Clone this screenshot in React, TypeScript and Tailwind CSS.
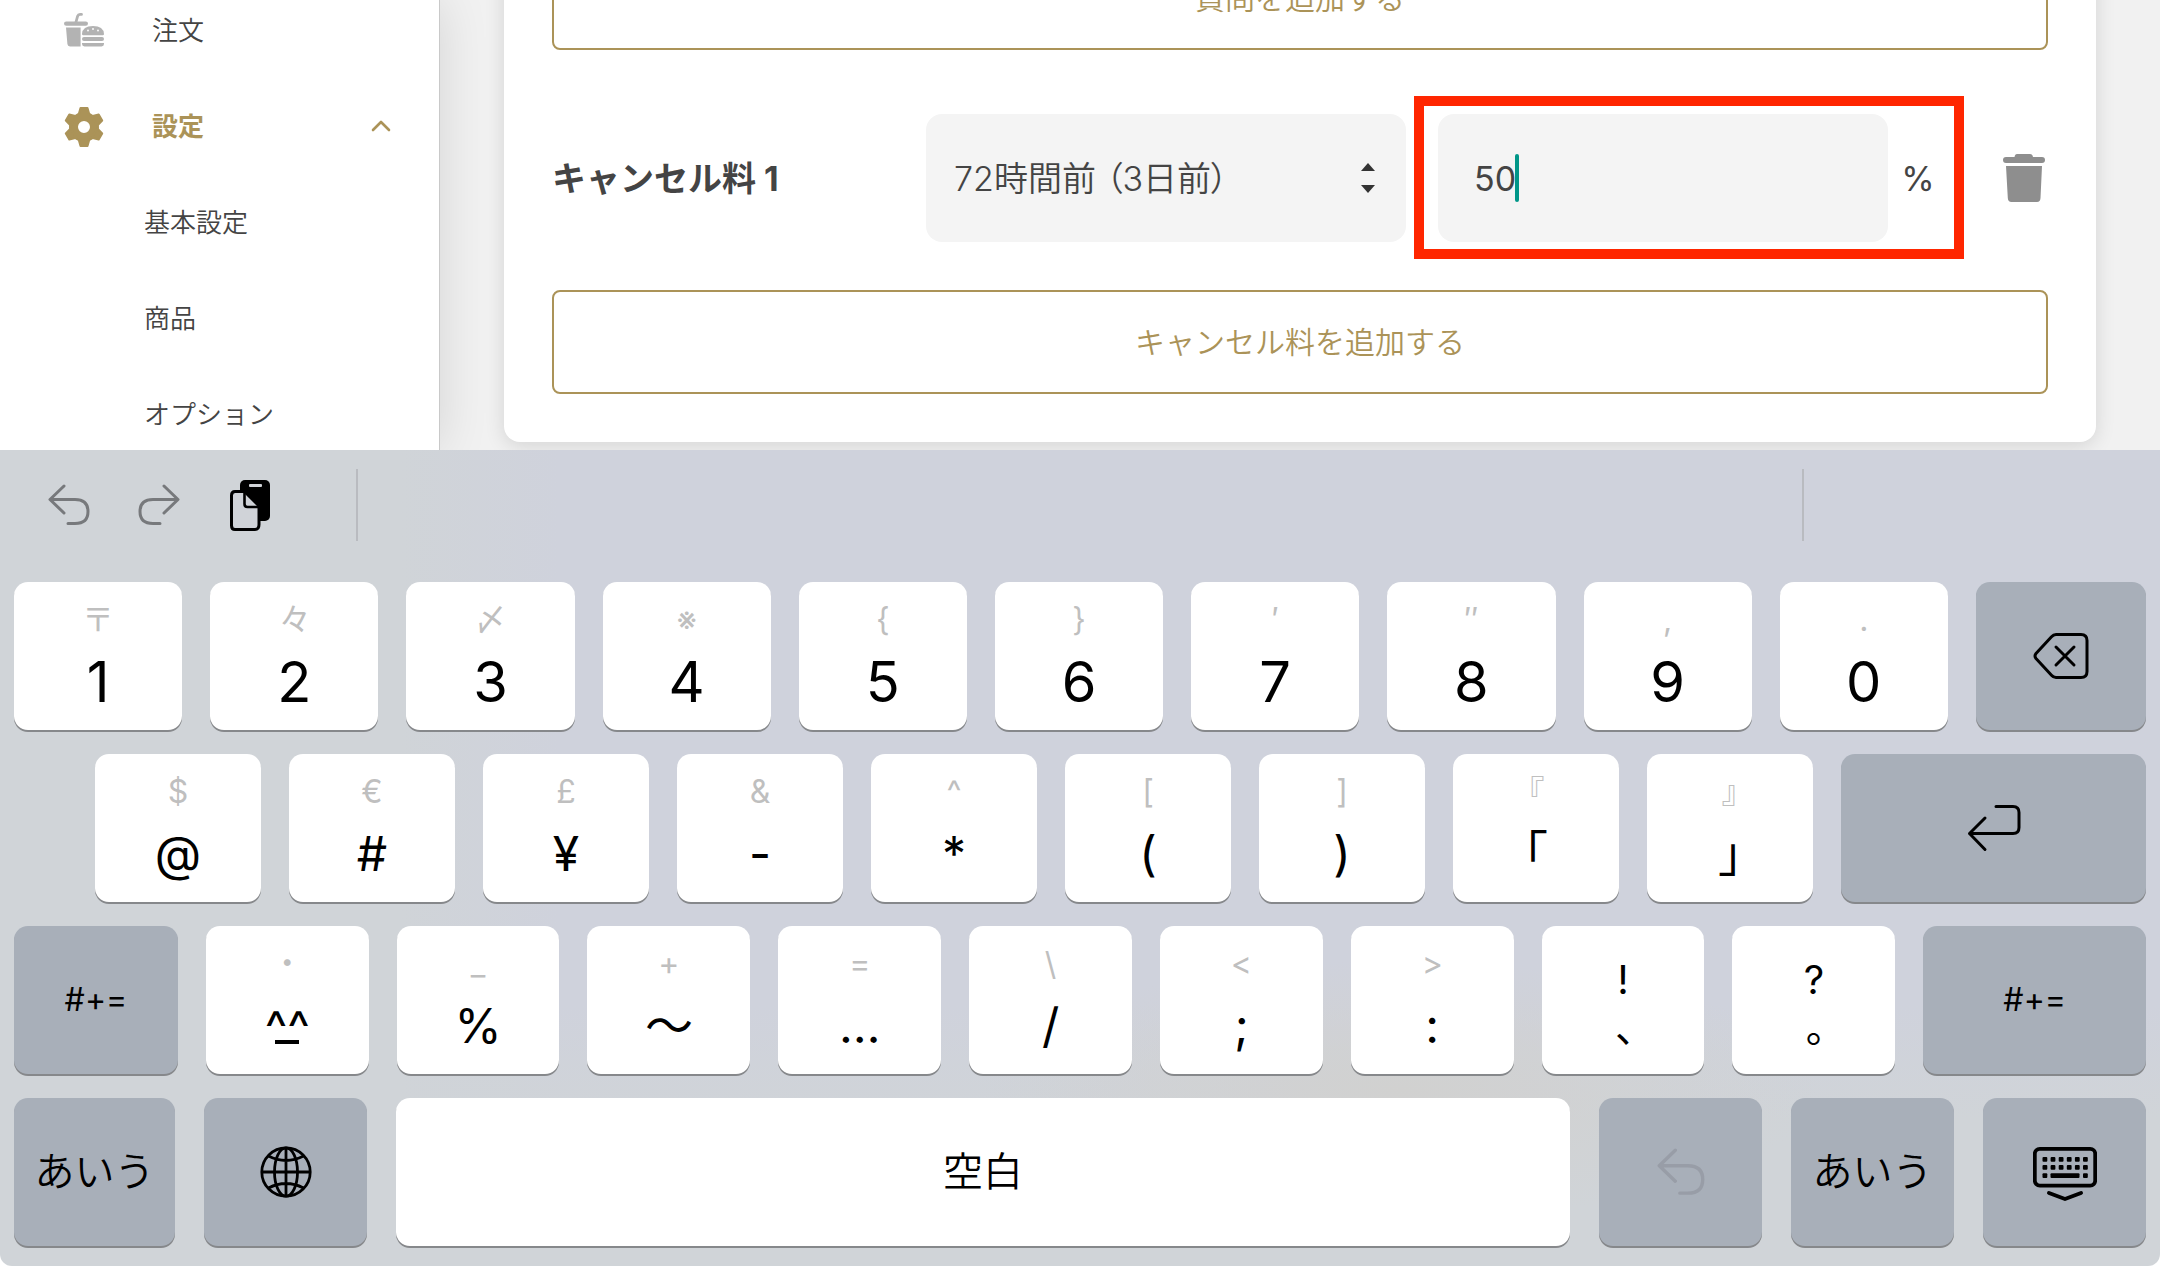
import type { ReactNode } from "react";

const cjk = "font-[Inter,'Noto_Sans_CJK_JP',sans-serif]";

type KeyDef = { hint?: string; main: string };

const digits: KeyDef[] = [
  { hint: "〒", main: "1" },
  { hint: "々", main: "2" },
  { hint: "〆", main: "3" },
  { hint: "※", main: "4" },
  { hint: "{", main: "5" },
  { hint: "}", main: "6" },
  { hint: "′", main: "7" },
  { hint: "″", main: "8" },
  { hint: ",", main: "9" },
  { hint: ".", main: "0" },
];

const symbols: KeyDef[] = [
  { hint: "$", main: "@" },
  { hint: "€", main: "#" },
  { hint: "£", main: "¥" },
  { hint: "&", main: "-" },
  { hint: "^", main: "*" },
  { hint: "[", main: "(" },
  { hint: "]", main: ")" },
  { hint: "『", main: "｢" },
  { hint: "』", main: "｣" },
];

const marks: KeyDef[] = [
  { hint: "・", main: "^_^" },
  { hint: "_", main: "%" },
  { hint: "+", main: "〜" },
  { hint: "=", main: "…" },
  { hint: "\\", main: "/" },
  { hint: "<", main: ";" },
  { hint: ">", main: ":" },
];

function FoodIcon() {
  return (
    <svg width="40" height="34" viewBox="0 0 40 34" fill="#b3b3b3">
      <path d="M12 9 13.6 3.2Q14.200 1.400 16 1.400H17.500" fill="none" stroke="#b3b3b3" strokeWidth="2.800" strokeLinecap="round" />
      <rect x="0" y="8.400" width="24" height="4.400" rx="2.200" />
      <path d="M2 14.500H16.600V33.400H6Q3.600 33.400 3.400 31Z" />
      <path d="M18 21Q18.500 13 29 13Q39.500 13 40 21Q40 22.200 38.800 22.200H19.200Q18 22.200 18 21Z" />
      <rect x="18" y="24" width="22" height="4" rx="2" />
      <path d="M18 30H40V31Q40 33.400 37.500 33.400H20.500Q18 33.400 18 31Z" />
      <g fill="#fff">
        <circle cx="24" cy="17.500" r="0.900" />
        <circle cx="29" cy="16" r="0.900" />
        <circle cx="34" cy="17.500" r="0.900" />
      </g>
    </svg>
  );
}

function GearIcon() {
  const teeth = [0, 60, 120, 180, 240, 300];
  return (
    <svg width="48" height="48" viewBox="0 0 48 48" fill="none" stroke="#ab9358" strokeLinejoin="round">
      <circle cx="24" cy="25" r="10.500" strokeWidth="9" />
      {teeth.map((deg) => (
        <path key={deg} d="M20.500 6H27.500L29.500 13H18.500Z" fill="#ab9358" strokeWidth="2" transform={`rotate(${deg} 24 25)`} />
      ))}
    </svg>
  );
}

function UndoIcon({ className = "" }: { className?: string }) {
  return (
    <svg width="42" height="42" viewBox="0 0 42 42" fill="none" stroke="currentColor" strokeWidth="3" strokeLinecap="round" strokeLinejoin="round" className={className}>
      <path d="M16 2 2 15.500 16 29M2.500 15.500H27Q40 15.500 40 27.500 40 39.500 27 39.500H20" />
    </svg>
  );
}

function PasteIcon() {
  return (
    <svg width="42" height="52" viewBox="0 0 42 52">
      <rect x="11" y="1" width="30" height="41" rx="5" fill="#000" />
      <rect x="20" y="5" width="13" height="3" rx="1" fill="#d0d3d8" />
      <path d="M6 12.500H15.500L30 27V45.500Q30 50.500 26 50.500H6Q2.500 50.500 2.500 46.500V16.500Q2.500 12.500 6 12.500Z" fill="#d0d3d8" stroke="#000" strokeWidth="3" />
      <path d="M15.500 12.500V25Q15.500 28 18.500 28H30" fill="none" stroke="#000" strokeWidth="2.600" />
    </svg>
  );
}

function DeleteIcon() {
  return (
    <svg width="56" height="48" viewBox="0 0 56 48" fill="none" stroke="#000" strokeWidth="3" strokeLinecap="round" strokeLinejoin="round">
      <path d="M23 2.500H48Q54 2.500 54 8.500V39.500Q54 45.500 48 45.500H23Q20.500 45.500 18.500 43.200L3 26.500Q1 24 3 21.500L18.500 4.800Q20.500 2.500 23 2.500Z" />
      <path d="M23 15 41 33M41 15 23 33" />
    </svg>
  );
}

function ReturnIcon() {
  return (
    <svg width="54" height="48" viewBox="0 0 54 48" fill="none" stroke="#000" strokeWidth="3" strokeLinecap="round" strokeLinejoin="round">
      <path d="M29 2.500H46Q52 2.500 52 8.500V23.500Q52 29.500 46 29.500H2.500M18 14 2.500 29.500 18 45.500" />
    </svg>
  );
}

function GlobeIcon() {
  return (
    <svg width="52" height="52" viewBox="0 0 52 52" fill="none" stroke="#000" strokeWidth="2.800">
      <circle cx="26" cy="26" r="24.200" />
      <ellipse cx="26" cy="26" rx="11.500" ry="24.200" />
      <path d="M26 2V50M2 26H50M8.500 10Q26 19 43.500 10M8.500 42Q26 33 43.500 42" />
    </svg>
  );
}

function KeyboardIcon() {
  const dots = [0, 1, 2, 3, 4, 5];
  return (
    <svg width="64" height="62" viewBox="0 -6 64 62">
      <rect x="1.800" y="1.800" width="60.400" height="36.800" rx="5" fill="none" stroke="#000" strokeWidth="3.800" />
      {dots.map((i) => (
        <g key={i}>
          <rect x={9.5 + i * 8.1} y="10" width="4.800" height="4.800" rx="1" />
          <rect x={9.5 + i * 8.1} y="18" width="4.800" height="4.800" rx="1" />
        </g>
      ))}
      <rect x="9.500" y="26.200" width="4.800" height="4.800" rx="1" />
      <rect x="17.500" y="26.200" width="29" height="4.800" rx="1" />
      <rect x="50" y="26.200" width="4.800" height="4.800" rx="1" />
      <path d="M16 46 32 52 48 46" fill="none" stroke="#000" strokeWidth="4" strokeLinecap="round" strokeLinejoin="round" />
    </svg>
  );
}

function Key({ children, className = "", dark = false, label }: { children: ReactNode; className?: string; dark?: boolean; label?: string }) {
  return (
    <button
      type="button"
      aria-label={label}
      className={`flex h-[148px] min-w-0 flex-col items-center rounded-[14px] shadow-[0_2px_0_#86888b] ${dark ? "justify-center bg-[#a8afb9]" : "bg-white"} ${className}`}
    >
      {children}
    </button>
  );
}

function CharKey({ hint, main, size, className }: KeyDef & { size: string; className: string }) {
  return (
    <Key className={className}>
      <span className="mt-4 h-11 text-[32px] leading-[44px] text-[#bfbfbf] [font-feature-settings:'palt']">{hint}</span>
      {main === "^_^" ? (
        <span className="flex h-20 flex-col items-center pt-[18px] text-[48px] leading-[48px]">
          <span className="h-9">^^</span>
          <span className="h-1 w-6 bg-black" />
        </span>
      ) : (
        <span className={`h-20 leading-[80px] [font-feature-settings:'palt'] ${size}`}>{main}</span>
      )}
    </Key>
  );
}

function PunctuationKey({ top, bottom }: { top: string; bottom: string }) {
  return (
    <Key className="flex-[163] justify-center pt-2 text-[40px] leading-[48px]">
      <span>{top}</span>
      <span className="pl-6">{bottom}</span>
    </Key>
  );
}

function AddButton({ children }: { children: ReactNode }) {
  return (
    <button type="button" className="h-[104px] w-full shrink-0 rounded-lg border-2 border-[#ab9358] text-[30px] font-[350] text-[#ab9358]">
      {children}
    </button>
  );
}

function Sidebar() {
  return (
    <aside className="z-10 w-[440px] shrink-0 border-r border-[#c9c9c9] bg-white shadow-[0_0_48px_rgba(0,0,0,0.12)]">
      <nav className="-mt-[18px] text-[26px] font-[350] text-[#444]">
        <a href="#orders" className="flex h-24 items-center pl-16">
          <span className="w-[88px]"><FoodIcon /></span>
          注文
        </a>
        <a href="#settings" className="flex h-24 items-center pl-[60px] font-bold text-[#ab9358]">
          <span className="w-[92px]"><GearIcon /></span>
          設定
          <svg width="20" height="12" viewBox="0 0 20 12" fill="none" stroke="currentColor" strokeWidth="2.600" strokeLinecap="round" strokeLinejoin="round" className="mr-12 ml-auto">
            <path d="M2 10 10 2 18 10" />
          </svg>
        </a>
        <a href="#basic" className="flex h-24 items-center pl-36">基本設定</a>
        <a href="#items" className="flex h-24 items-center pl-36">商品</a>
        <a href="#options" className="flex h-24 items-center pl-36">オプション</a>
      </nav>
    </aside>
  );
}

function CancelFeeRow() {
  return (
    <div className="my-12 flex shrink-0 items-center pt-4 text-[34px] text-[#444]">
      <label htmlFor="timing" className="w-[374px] shrink-0 font-bold">キャンセル料 1</label>
      <div className="relative w-[480px] shrink-0">
        <select id="timing" className="h-32 w-full appearance-none rounded-2xl bg-[#f4f4f4] pl-7 font-[350] [font-feature-settings:'palt']">
          <option>72時間前 （3日前）</option>
        </select>
        <svg width="14" height="30" viewBox="0 0 14 30" fill="#333" className="pointer-events-none absolute top-[49px] right-[31px]">
          <path d="M7 0 14 8H0ZM0 22H14L7 30Z" />
        </svg>
      </div>
      {/* Highlighted fee input */}
      <div className="relative ml-8 flex min-w-0 flex-1 items-center">
        <div className="pointer-events-none absolute -top-[18px] -right-4 -bottom-[17px] -left-6 border-[10px] border-[#ff2600]" />
        <input aria-label="キャンセル料" defaultValue="50" className="h-32 min-w-0 flex-1 rounded-2xl bg-[#f4f4f4] pl-9" />
        <span className="absolute top-10 left-[77px] h-12 w-1 rounded-full bg-[#009688]" />
        <span className="w-[60px] text-center">%</span>
      </div>
      <button type="button" aria-label="削除" className="ml-[54px] shrink-0 pr-0.5">
        <svg width="44" height="48" viewBox="0 0 44 48" fill="#8e8e8e">
          <path d="M15 0H28Q30.500 0 31 3H40Q43 3 43 6 43 9 40 9H4Q1 9 1 6 1 3 4 3H12.500Q13 0 15 0ZM4 12H40L38.500 44Q38.300 48 35 48H9.500Q6 48 5.800 44Z" />
        </svg>
      </button>
    </div>
  );
}

function Keyboard() {
  return (
    <section className="shrink-0 bg-white">
      <div className="rounded-b-xl bg-[#d0d3d9] bg-[radial-gradient(ellipse_420px_130px_at_1400px_640px,#d1d1d0,transparent),linear-gradient(180deg,transparent_68%,#d0d4d8_82%),linear-gradient(90deg,#d0d4d8_400px,#cfd2dc_560px)] px-3.5 pb-5">
        <div className="flex h-[132px] items-center pb-[22px] text-[#77797c]">
          <button type="button" aria-label="取り消す" className="ml-[34px]"><UndoIcon /></button>
          <button type="button" aria-label="やり直す" className="ml-12"><UndoIcon className="-scale-x-100" /></button>
          <button type="button" aria-label="ペースト" className="ml-[49px]"><PasteIcon /></button>
          <span className="ml-[85px] h-[72px] w-0.5 bg-[#b9bbc0]" />
          <span className="mr-[342px] ml-auto h-[72px] w-0.5 bg-[#b9bbc0]" />
        </div>

        <div className="flex flex-col gap-6">
          <div className="flex gap-7">
            {digits.map((k) => (
              <CharKey key={k.main} {...k} size="text-[56px]" className="flex-[168]" />
            ))}
            <Key dark label="削除" className="flex-[170]"><DeleteIcon /></Key>
          </div>

          <div className="flex gap-7 pl-[81px]">
            {symbols.map((k) => (
              <CharKey key={k.main} {...k} size="text-[48px]" className="flex-[166]" />
            ))}
            <Key dark label="改行" className="flex-[305]"><ReturnIcon /></Key>
          </div>

          <div className="flex gap-7">
            <Key dark className="flex-[164] text-[32px]">#+=</Key>
            {marks.map((k) => (
              <CharKey key={k.main} {...k} size="text-[48px]" className="flex-[163]" />
            ))}
            <PunctuationKey top="!" bottom="、" />
            <PunctuationKey top="?" bottom="。" />
            <Key dark className="flex-[223] text-[32px]">#+=</Key>
          </div>

          <div className="flex gap-[29px] text-[40px] font-[350]">
            <Key dark className="flex-[161]">あいう</Key>
            <Key dark label="地球儀" className="flex-[163]"><GlobeIcon /></Key>
            <Key className="flex-[1174] justify-center">空白</Key>
            <Key dark label="取り消す" className="flex-[163] text-[#989da7]"><UndoIcon className="size-12" /></Key>
            <Key dark className="flex-[163]">あいう</Key>
            <Key dark label="キーボードを隠す" className="flex-[163]"><KeyboardIcon /></Key>
          </div>
        </div>
      </div>
    </section>
  );
}

export default function App() {
  return (
    <div className={`flex h-screen flex-col text-black ${cjk}`}>
      <div className="flex min-h-0 flex-1 overflow-hidden bg-[#f1f1f1]">
        <Sidebar />
        <main className="flex min-w-0 flex-1 flex-col justify-end px-16 pb-2">
          <div className="flex flex-col justify-end rounded-b-2xl bg-white px-12 pb-12 shadow-[0_4px_20px_rgba(0,0,0,0.12)]">
            <AddButton>質問を追加する</AddButton>
            <CancelFeeRow />
            <AddButton>キャンセル料を追加する</AddButton>
          </div>
        </main>
      </div>
      <Keyboard />
    </div>
  );
}
